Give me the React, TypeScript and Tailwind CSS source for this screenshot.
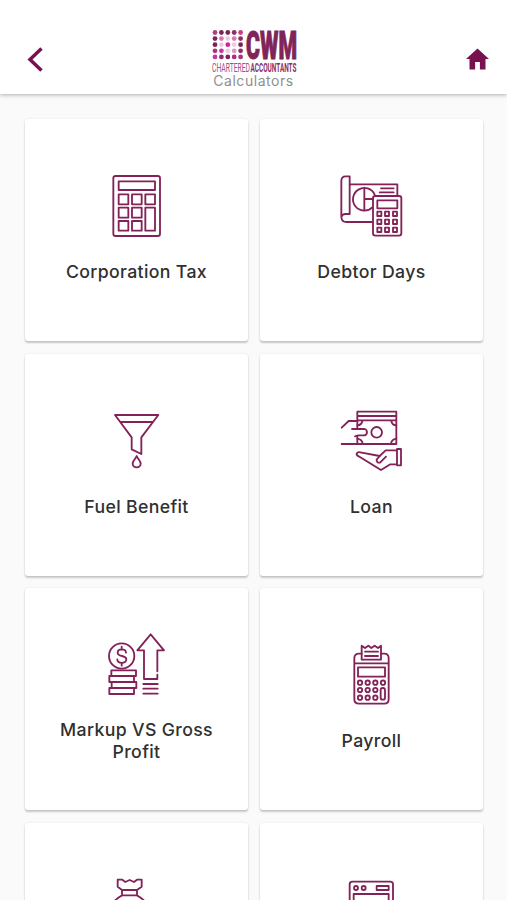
import type { ReactNode } from "react";

type Calculator = {
  id: string;
  label?: string;
  viewBox: string;
  icon: ReactNode;
};

const dotRows = [
  ["#b0407f", "#7c2453", "#7c2453", "#8d2f63", "#c2408f"],
  ["#7c2453", "#d678b4", "#eccbe0", "#d678b4", "#8d2f63"],
  ["#7c2453", "#eccbe0", "#d4209a", "#eccbe0", "#7c2453"],
  ["#a8357a", "#c438a0", "#eccbe0", "#d99ac5", "#8d2f63"],
  ["#c438a0", "#8d2f63", "#7c2453", "#b02a88", "#a8357a"],
];

const calculators: Calculator[] = [
  {
    id: "corporation-tax",
    label: "Corporation Tax",
    viewBox: "-3 36 255 180",
    icon: (
      <>
        <rect x="55" y="33" width="140" height="180" rx="7" />
        <rect x="71" y="49" width="109" height="26" />
        <rect x="71" y="88" width="29" height="30" />
        <rect x="111" y="88" width="29" height="30" />
        <rect x="151" y="88" width="29" height="30" />
        <rect x="71" y="128" width="29" height="30" />
        <rect x="111" y="128" width="29" height="30" />
        <rect x="71" y="168" width="29" height="29" />
        <rect x="111" y="168" width="29" height="29" />
        <rect x="151" y="128" width="29" height="69" />
      </>
    ),
  },
  {
    id: "debtor-days",
    label: "Debtor Days",
    viewBox: "-3 36 255 180",
    icon: (
      <>
        <path d="M59 147V34H47Q34 34 34 48V155Q34 171 50 171H127M59 147H47Q36 147 34 156" />
        <path d="M59 58H202V92M153 70H191M149 82H191" />
        <path d="M134 89A34 34 0 1 0 127 127M103 68V134M103 102H129" />
        <rect x="129" y="93" width="85" height="119" rx="7" />
        <rect x="142" y="106" width="60" height="24" />
        {[140, 164, 188].map((y) =>
          [142, 165, 189].map((x) => (
            <rect key={`${x}-${y}`} x={x} y={y} width="12" height="13" />
          ))
        )}
      </>
    ),
  },
  {
    id: "fuel-benefit",
    label: "Fuel Benefit",
    viewBox: "-3 35 255 180",
    icon: (
      <>
        <path d="M60 44H190L139 111V161L110 147V111ZM76 65H174" />
        <path d="M125 167C121 177 113 182 113 190A12 11 0 0 0 137 190C137 182 129 177 125 167Z" />
      </>
    ),
  },
  {
    id: "loan",
    label: "Loan",
    viewBox: "-3 35 255 180",
    icon: (
      <>
        <path d="M82 85V34H199V131H82V107M82 47H199M82 60H199" />
        <path d="M35 82L56 62H82M35 131H82M66 86H104A10 10 0 0 1 104 105H85L75 108" />
        <circle cx="140" cy="96" r="16" />
        <path d="M82 75Q95 74 97 62M184 62Q186 75 199 75M82 115Q97 117 98 131M183 131Q184 117 199 115" />
        <path d="M201 146H213V195H201ZM201 150H167L149 167L91 156C80 154 75 162 86 168L153 209L181 192H201" />
        <path d="M149 167L140 178Q139 188 150 187L168 169" />
      </>
    ),
  },
  {
    id: "markup",
    label: "Markup VS Gross Profit",
    viewBox: "-3 31 255 180",
    icon: (
      <>
        <circle cx="80" cy="94" r="38" />
        <path d="M93 84C92 71 68 71 68 84C68 98 94 90 94 104C94 119 67 118 67 104M80 66V75M80 115V123" />
        <path d="M49 137H123V154H49ZM43 154H117V172H43ZM50 172H124V190H50ZM43 190H117V208H43Z" />
        <path d="M187 140V77H207L167 29L127 77H147V163H187V150M145 178H188M145 192H188M145 207H188" />
      </>
    ),
  },
  {
    id: "payroll",
    label: "Payroll",
    viewBox: "-3 34 255 180",
    icon: (
      <>
        <path d="M95 57H87Q73 57 73 71V194Q73 207 87 207H163Q176 207 176 194V71Q176 57 163 57H153M73 86H176" />
        <path d="M95 75V33L105 40L115 33L124 40L134 33L144 40L153 33V75ZM105 51H144M105 64H144" />
        <rect x="84" y="98" width="81" height="28" />
        {[144, 166, 189].map((y) =>
          [90, 113, 136, 159]
            .filter((x) => x !== 159 || y === 144)
            .map((x) => <circle key={`${x}-${y}`} cx={x} cy={y} r="6.5" />)
        )}
        <rect x="152" y="160" width="13" height="35" rx="6" />
      </>
    ),
  },
  {
    id: "money-bag",
    viewBox: "12 48 255 180",
    icon: (
      <>
        <path d="M96 75L83 65V44L97 44L106 51L119 45L132 51L141 44H155V65L141 75ZM96 75V91H141V75M96 91C63 110 42 145 42 181Q42 215 73 215H164Q195 215 195 181C195 145 174 110 141 91" />
        <path d="M135 136C132 122 104 124 105 138C106 155 136 145 136 164C136 181 103 180 102 164M119 117V126M119 178V188" />
      </>
    ),
  },
  {
    id: "window",
    viewBox: "-3 47 255 180",
    icon: (
      <>
        <path d="M59 220V57Q59 49 67 49H181Q189 49 189 57V220Z" />
        <circle cx="78" cy="68" r="6" />
        <circle cx="101" cy="68" r="6" />
        <rect x="140" y="62" width="36" height="12" />
        <rect x="71" y="86" width="105" height="118" />
      </>
    ),
  },
];

function Logo() {
  return (
    <svg className="ml-0.5 h-[44px] w-[88px] overflow-visible" viewBox="0 0 88 44" role="img" aria-label="CWM Chartered Accountants">
      {dotRows.map((row, y) =>
        row.map((color, x) => (
          <circle key={`${x}-${y}`} cx={4 + x * 6.4} cy={4.5 + y * 6.1} r="2.4" fill={color} />
        ))
      )}
      <text
        transform="translate(35 31) scale(1 1.65)"
        fontSize="23"
        fontWeight="900"
        textLength="51"
        lengthAdjust="spacingAndGlyphs"
        className="fill-[#80245a] stroke-[#80245a] font-['Roboto','Liberation_Sans',sans-serif]"
        strokeWidth="0.6"
      >
        CWM
      </text>
      <text
        x="1"
        y="43.5"
        fontSize="12"
        textLength="38"
        lengthAdjust="spacingAndGlyphs"
        className="fill-[#a34d80] font-['Roboto','Liberation_Sans',sans-serif]"
      >
        CHARTERED
      </text>
      <text
        x="39.5"
        y="43.5"
        fontSize="12"
        fontWeight="700"
        textLength="46"
        lengthAdjust="spacingAndGlyphs"
        className="fill-[#8b3066] font-['Roboto','Liberation_Sans',sans-serif]"
      >
        ACCOUNTANTS
      </text>
    </svg>
  );
}

function Header() {
  return (
    <header className="relative z-10 grid h-[94px] shrink-0 grid-cols-[1fr_auto_1fr] items-start bg-white shadow-[0_1px_4px_rgba(0,0,0,0.3)]">
      <button className="mt-[46px] ml-6 h-[28px] w-6" aria-label="Back">
        <svg className="h-full w-full fill-none stroke-[#7a114f]" viewBox="0 0 24 28" strokeWidth="3.5">
          <path d="M17.5 2.5L6 13.5L17.5 24.5" />
        </svg>
      </button>
      <div className="flex flex-col items-center pt-[28px]">
        <Logo />
        <h1 className="mt-px font-['Inter','Liberation_Sans',sans-serif] text-[14px] leading-[16px] tracking-[0.55px] text-[#8f8f8f]">
          Calculators
        </h1>
      </div>
      <button className="mt-[47px] mr-[17px] h-6 w-[25px] justify-self-end" aria-label="Home">
        <svg className="h-full w-full fill-[#7a114f]" viewBox="0 0 25 24">
          <path d="M12.5 1.5L24 12H20.5V22.5H14.9V15H10.1V22.5H4.5V12H1Z" />
        </svg>
      </button>
    </header>
  );
}

function CalculatorCard({ label, viewBox, icon }: Calculator) {
  return (
    <button className="flex flex-col items-center justify-center rounded-[3px] bg-white px-6 shadow-[0_2px_2px_rgba(0,0,0,0.2),0_0_2px_rgba(0,0,0,0.1)]">
      <svg
        className="h-[60px] w-[85px] shrink-0 overflow-visible fill-none stroke-[#822258]"
        viewBox={viewBox}
        strokeWidth="5.5"
        strokeLinejoin="round"
        strokeLinecap="round"
      >
        {icon}
      </svg>
      <span className="mt-6 min-h-[22px] font-['Inter','Liberation_Sans',sans-serif] text-[17.7px] leading-[22px] font-medium tracking-[0.35px] text-[#303030]">
        {label}
      </span>
    </button>
  );
}

export default function App() {
  return (
    <div className="flex h-screen flex-col overflow-hidden bg-[#fafafa]">
      <Header />
      <main className="grid auto-rows-[222px] grid-cols-2 gap-x-3 gap-y-[12.6px] pt-[25px] pr-6 pl-[25px]">
        {calculators.map((item) => (
          <CalculatorCard key={item.id} {...item} />
        ))}
      </main>
    </div>
  );
}
